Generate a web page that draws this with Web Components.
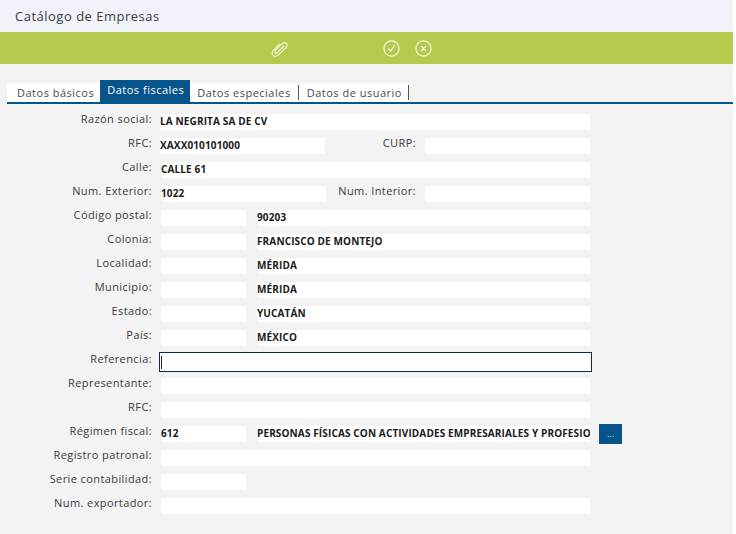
<!DOCTYPE html>
<html lang="es">
<head>
<meta charset="utf-8">
<title>Catálogo de Empresas</title>
<style>
  html, body { margin: 0; background: #fff; }
  body { font-family: "Open Sans", sans-serif; }
</style>
</head>
<body>
<empresa-app>
  <app-toolbar slot="toolbar"></app-toolbar>
  <tab-bar slot="tabs" active="1" tabs="Datos básicos|Datos fiscales|Datos especiales|Datos de usuario"></tab-bar>
  <form-row label="Razón social:"><text-box w="430" value="LA NEGRITA SA DE CV"></text-box></form-row>
  <form-row label="RFC:">
    <text-box w="165" value="XAXX010101000"></text-box>
    <row-label w="91">CURP:</row-label>
    <text-box x="9" w="165"></text-box>
  </form-row>
  <form-row label="Calle:"><text-box x="1" w="429" value="CALLE 61"></text-box></form-row>
  <form-row label="Num. Exterior:">
    <text-box x="1" w="165" value="1022"></text-box>
    <row-label w="90">Num. Interior:</row-label>
    <text-box x="9" w="165"></text-box>
  </form-row>
  <form-row label="Código postal:"><text-box x="1" w="85"></text-box><text-box x="11" w="333" value="90203"></text-box></form-row>
  <form-row label="Colonia:"><text-box x="1" w="85"></text-box><text-box x="11" w="333" value="FRANCISCO DE MONTEJO"></text-box></form-row>
  <form-row label="Localidad:"><text-box x="1" w="85"></text-box><text-box x="11" w="333" value="MÉRIDA"></text-box></form-row>
  <form-row label="Municipio:"><text-box x="1" w="85"></text-box><text-box x="11" w="333" value="MÉRIDA"></text-box></form-row>
  <form-row label="Estado:"><text-box x="1" w="85"></text-box><text-box x="11" w="333" value="YUCATÁN"></text-box></form-row>
  <form-row label="País:"><text-box x="1" w="85"></text-box><text-box x="11" w="333" value="MÉXICO"></text-box></form-row>
  <form-row label="Referencia:"><text-box x="-1" w="433" focused></text-box></form-row>
  <form-row label="Representante:"><text-box x="1" w="429"></text-box></form-row>
  <form-row label="RFC:"><text-box x="1" w="429"></text-box></form-row>
  <form-row label="Régimen fiscal:">
    <text-box x="1" w="85" value="612"></text-box>
    <text-box x="11" w="333" value="PERSONAS FÍSICAS CON ACTIVIDADES EMPRESARIALES Y PROFESIONALES"></text-box>
    <dots-button></dots-button>
  </form-row>
  <form-row label="Registro patronal:"><text-box x="1" w="429"></text-box></form-row>
  <form-row label="Serie contabilidad:"><text-box x="1" w="85"></text-box></form-row>
  <form-row label="Num. exportador:"><text-box x="1" w="429"></text-box></form-row>
</empresa-app>

<script>
  class EmpresaApp extends HTMLElement {
    constructor() {
      super();
      this.attachShadow({ mode: 'open' });
      this.shadowRoot.innerHTML = `
        <style>
          :host { display: block; width: 733px; height: 534px; background: #f3f3f3; color: #333; overflow: hidden; }
          .title { height: 32px; background: #f0f3fa; font-size: 13px; line-height: 32px; padding-left: 15px; letter-spacing: .5px; color: #3c3c3c; }
          .form { display: flex; flex-direction: column; gap: 8px; padding-top: 10px; }
        </style>
        <div class="title">Catálogo de Empresas</div>
        <slot name="toolbar"></slot>
        <slot name="tabs"></slot>
        <div class="form"><slot></slot></div>
      `;
    }
  }

  class AppToolbar extends HTMLElement {
    constructor() {
      super();
      this.attachShadow({ mode: 'open' });
      this.shadowRoot.innerHTML = `
        <style>
          :host { display: flex; align-items: center; height: 32px; background: #b5c94d; padding-left: 271px; }
          svg { display: block; fill: none; stroke: #f6f8e4; stroke-linecap: round; stroke-linejoin: round; }
          .clip { margin: 2px 95px 0 0; }
          .close { margin-left: 15px; }
        </style>
        <svg class="clip" width="17" height="16" viewBox="0 0 17 16" stroke-width="1.1">
          <path d="M13 5 6.5 11.5C5.5 12.5 4 12.3 3.8 11.2 3.6 10.4 4 9.8 4.6 9.2L10.8 2.8C12.2 1.4 14.3 1.2 15.3 2.3 16.4 3.5 16 5.4 14.8 6.6L7.8 13.6C6 15.4 3.4 15.6 2 14.4 .7 13.2 .9 11 2.4 9.4L8.5 3.2"/>
        </svg>
        <svg width="17" height="17" viewBox="0 0 17 17" stroke-width="1.2">
          <circle cx="8.5" cy="8.5" r="7.6"/><path d="M5.6 8.9 7.6 11.2 11.5 5.4"/>
        </svg>
        <svg class="close" width="17" height="17" viewBox="0 0 17 17" stroke-width="1.2">
          <circle cx="8.5" cy="8.5" r="7.6"/><path d="M6.4 6.4 10.6 10.6M10.6 6.4 6.4 10.6"/>
        </svg>
      `;
    }
  }

  class TabBar extends HTMLElement {
    constructor() {
      super();
      this.attachShadow({ mode: 'open' });
      this.shadowRoot.innerHTML = `
        <style>
          :host { display: flex; align-items: flex-end; height: 22px; margin-top: 16px; margin-left: 7px; border-bottom: 2px solid #07548b; }
          .tab { height: 19px; line-height: 20px; font-size: 11px; letter-spacing: .5px; color: #4a4a4a; background: #fff; white-space: nowrap; position: relative; box-sizing: border-box; }
          .tab.sep::after { content: ''; position: absolute; right: 0; top: 2px; height: 15px; width: 1px; background: #555; }
          .tab.active { height: 22px; line-height: 20px; background: #07548b; color: #fff; }
        </style>
      `;
      const pads = [[10, 6], [7, 6], [7, 8], [8, 7]];
      this.getAttribute('tabs').split('|').forEach((text, i) => {
        const tab = document.createElement('div');
        tab.className = 'tab';
        if (i == this.getAttribute('active')) tab.classList.add('active');
        if (i > 1) tab.classList.add('sep');
        tab.style.padding = `0 ${pads[i][1]}px 0 ${pads[i][0]}px`;
        tab.textContent = text;
        this.shadowRoot.appendChild(tab);
      });
    }
  }

  class FormRow extends HTMLElement {
    constructor() {
      super();
      this.attachShadow({ mode: 'open' });
      this.shadowRoot.innerHTML = `
        <style>
          :host { display: flex; height: 16px; align-items: flex-start; }
          .label { width: 152px; margin: -2px 8px 0 0; text-align: right; font-size: 11px; line-height: 13px; letter-spacing: .4px; color: #3a3a3a; white-space: nowrap; flex: none; }
        </style>
        <div class="label"></div>
        <slot></slot>
      `;
      this.shadowRoot.querySelector('.label').textContent = this.getAttribute('label');
    }
  }

  class RowLabel extends HTMLElement {
    constructor() {
      super();
      this.attachShadow({ mode: 'open' });
      this.shadowRoot.innerHTML = `
        <style>
          :host { display: block; flex: none; margin-top: -2px; text-align: right; font-size: 11px; line-height: 13px; letter-spacing: .4px; color: #3a3a3a; white-space: nowrap; }
        </style>
        <slot></slot>
      `;
      this.style.width = this.getAttribute('w') + 'px';
    }
  }

  class TextBox extends HTMLElement {
    constructor() {
      super();
      this.attachShadow({ mode: 'open' });
      this.shadowRoot.innerHTML = `
        <style>
          :host { display: block; flex: none; height: 16px; background: #fff; box-sizing: border-box; overflow: hidden; }
          .value { font-size: 10px; font-weight: 700; letter-spacing: .13px; line-height: 14px; color: #1a1a1a; white-space: nowrap; }
          :host([focused]) { height: 20px; margin-top: -2px; border: 1px solid #12283f; }
          :host([focused]) .value { height: 13px; width: 1px; margin: 3px 0 0 1px; background: #222; }
        </style>
        <div class="value"></div>
      `;
      this.shadowRoot.querySelector('.value').textContent = this.getAttribute('value') || '';
      this.style.width = this.getAttribute('w') + 'px';
      this.style.marginLeft = (this.getAttribute('x') || 0) + 'px';
    }
  }

  class DotsButton extends HTMLElement {
    constructor() {
      super();
      this.attachShadow({ mode: 'open' });
      this.shadowRoot.innerHTML = `
        <style>
          :host { display: block; flex: none; width: 23px; height: 20px; margin: -2px 0 0 9px; background: #07548b; color: #fff; font-size: 10px; line-height: 19px; font-weight: 300; text-align: center; }
        </style>
        ...
      `;
    }
  }

  customElements.define('empresa-app', EmpresaApp);
  customElements.define('app-toolbar', AppToolbar);
  customElements.define('tab-bar', TabBar);
  customElements.define('form-row', FormRow);
  customElements.define('row-label', RowLabel);
  customElements.define('text-box', TextBox);
  customElements.define('dots-button', DotsButton);
</script>
</body>
</html>
